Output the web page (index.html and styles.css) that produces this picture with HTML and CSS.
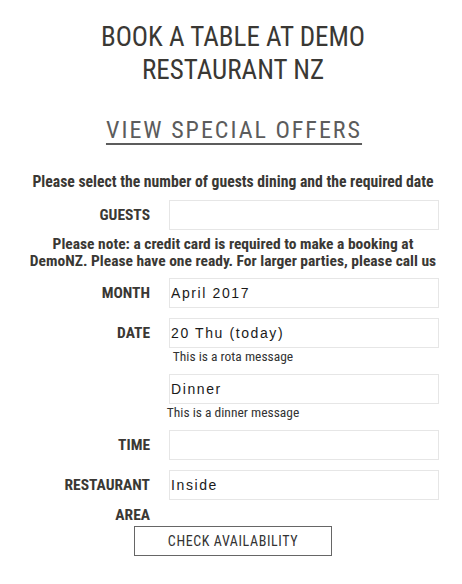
FILE: index.html
```html
<!DOCTYPE html>
<html lang="en">
<head>
<meta charset="utf-8">
<title>Book a table</title>
<link rel="stylesheet" href="styles.css">
</head>
<body>
<div class="page">
  <h1 class="title">BOOK A TABLE AT DEMO RESTAURANT NZ</h1>
  <a class="offers" href="#">VIEW SPECIAL OFFERS</a>
  <p class="intro">Please select the number of guests dining and the required date</p>
  <form class="booking">
    <div class="row">
      <label class="label">GUESTS</label>
      <div class="field"><input class="input" type="text" value=""></div>
    </div>
    <p class="note">Please note: a credit card is required to make a booking at<br>DemoNZ. Please have one ready. For larger parties, please call us</p>
    <div class="row">
      <label class="label">MONTH</label>
      <div class="field"><input class="input" type="text" value="April 2017"></div>
    </div>
    <div class="row">
      <label class="label">DATE</label>
      <div class="field">
        <input class="input" type="text" value="20 Thu (today)">
        <div class="msg">This is a rota message</div>
      </div>
    </div>
    <div class="row">
      <span class="label"></span>
      <div class="field">
        <input class="input" type="text" value="Dinner">
        <div class="msg">This is a dinner message</div>
      </div>
    </div>
    <div class="row">
      <label class="label">TIME</label>
      <div class="field"><input class="input" type="text" value=""></div>
    </div>
    <div class="row row-last">
      <label class="label">RESTAURANT AREA</label>
      <div class="field"><input class="input" type="text" value="Inside"></div>
    </div>
    <button class="check" type="button">CHECK AVAILABILITY</button>
  </form>
</div>
</body>
</html>
```
FILE: styles.css
```css
html, body {
  margin: 0;
  padding: 0;
  background: #ffffff;
}

.page {
  padding: 21px 8px 0 12px;
  font-family: "Roboto Condensed", "DejaVu Sans Condensed", sans-serif;
  color: #3a3834;
  display: flex;
  flex-direction: column;
  align-items: center;
}

.title {
  margin: 0;
  width: 300px;
  font-size: 27px;
  line-height: 33px;
  font-weight: normal;
  text-align: center;
  color: #3a3834;
}

.offers {
  display: block;
  margin-top: 28px;
  padding-left: 2px;
  font-size: 24px;
  line-height: 30px;
  letter-spacing: 2px;
  color: #5c5c5c;
  text-decoration: underline;
  text-decoration-thickness: 2px;
  text-underline-offset: 5px;
}

.intro {
  margin: 28px 0 0;
  font-size: 15.7px;
  line-height: 18px;
  font-weight: bold;
  text-align: center;
  white-space: nowrap;
}

.booking {
  align-self: stretch;
  margin-top: 9px;
  display: flex;
  flex-direction: column;
}

.row {
  display: flex;
  align-items: flex-start;
}

.row + .row {
  margin-top: 10px;
}

.label {
  width: 138px;
  flex: none;
  display: flex;
  justify-content: flex-end;
  text-align: right;
  font-size: 15.5px;
  font-weight: bold;
  line-height: 30px;
  color: #3a3834;
}

.row-last .label {
  padding-left: 40px;
  box-sizing: border-box;
}

.field {
  margin-left: 19px;
  width: 270px;
  display: flex;
  flex-direction: column;
}

.input {
  box-sizing: border-box;
  width: 270px;
  height: 30px;
  margin: 0;
  padding: 0 1px;
  border: 1px solid #e6e6e6;
  background: #ffffff;
  font-family: "Liberation Sans", Arial, sans-serif;
  font-size: 14px;
  letter-spacing: 1.6px;
  color: #1a1a1a;
  outline: none;
}

.msg {
  width: 140px;
  margin-left: -6px;
  text-align: center;
  font-size: 13.5px;
  line-height: 16px;
  color: #333333;
  white-space: nowrap;
}

.note {
  margin: 6px 0 8px;
  font-size: 15.5px;
  line-height: 17px;
  font-weight: bold;
  text-align: center;
  white-space: nowrap;
}

.check {
  align-self: center;
  margin-top: -4px;
  width: 198px;
  height: 30px;
  border: 1px solid #666666;
  background: #ffffff;
  font-family: "Roboto Condensed", "DejaVu Sans Condensed", sans-serif;
  font-size: 14px;
  letter-spacing: 0.6px;
  color: #333333;
  padding: 0;
}
```
